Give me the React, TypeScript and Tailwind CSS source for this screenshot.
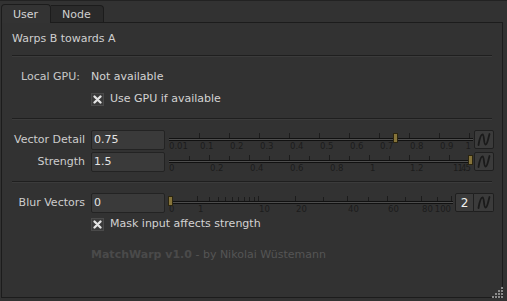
import React from 'react';

type Tick = { x: number; major?: boolean };
type Label = { x: number; text: string; end?: boolean };

const Slider: React.FC<{ width: number; ticks: Tick[]; labels: Label[]; handle: number }> = ({ width, ticks, labels, handle }) => (
  <svg width={width} height={20} className="shrink-0 ml-[2px]">
    <rect x={2} y={8} width={width - 2} height={1} fill="#111" />
    <rect x={2} y={9} width={width - 2} height={1} fill="#4e4e4e" />
    <rect x={2} y={10} width={width - 2} height={1} fill="#111" />
    {ticks.map((t, i) => (
      <rect key={i} x={Math.round(t.x)} y={t.major ? 3 : 4} width={1} height={t.major ? 5 : 4} fill="#1c1c1c" />
    ))}
    {labels.map((l, i) => (
      <text
        key={i}
        x={l.end ? l.x : Math.round(l.x) + 1}
        y={19}
        fontSize={8.5}
        fill="#1c1c1c"
        textAnchor={l.end ? 'end' : 'start'}
        fontFamily="DejaVu Sans, sans-serif"
      >
        {l.text}
      </text>
    ))}
    <rect x={Math.round(handle) - 1 + 0.5} y={3.5} width={4} height={9} fill="#86743a" stroke="#2b2510" />
  </svg>
);

const Wave: React.FC = () => (
  <svg width={18} height={17} viewBox="0 0 18 17">
    <path
      d="M3.5 14 C4.5 8, 5.5 3.5, 7.5 3.5 C9.5 3.5, 8.5 13.5, 10.5 13.5 C12.5 13.5, 13 8, 14.5 3"
      fill="none"
      stroke="#1a1a1a"
      strokeWidth={1.8}
      strokeLinecap="round"
    />
  </svg>
);

const CurveButton: React.FC = () => (
  <div className="ml-[1px] w-[20px] h-[19px] self-start bg-[#3b3b3b] border border-[#1f1f1f] rounded-[2px] flex items-center justify-center">
    <Wave />
  </div>
);

const Check: React.FC<{ label: string; className?: string }> = ({ label, className }) => (
  <div className={`flex items-center h-[16px] pl-[89px] ${className ?? ''}`}>
    <div className="w-[13px] h-[13px] bg-[#3a3a3a] border border-[#4a4a4a] flex items-center justify-center">
      <svg width={9} height={9} viewBox="0 0 9 9">
        <path d="M1.5 1.5 L7.5 7.5 M7.5 1.5 L1.5 7.5" stroke="#e4e4e4" strokeWidth={2.3} strokeLinecap="round" />
      </svg>
    </div>
    <span className="ml-[6px] text-[#d2d2d2] leading-[14px]">{label}</span>
  </div>
);

const Input: React.FC<{ value: string }> = ({ value }) => (
  <div className="ml-[6px] w-[74px] h-[20px] bg-[#3a3a3a] border border-[#232323] rounded-[2px] flex items-center pl-[2px] text-[#e4e4e4]">
    {value}
  </div>
);

const Sep: React.FC<{ className?: string }> = ({ className }) => (
  <div className={`ml-[10px] mr-[10px] h-[2px] border-t border-[#1f1f1f] border-b border-b-[#3b3b3b] ${className ?? ''}`} />
);

const vd = (v: number) => 2 + 300 * v;
const st = (v: number) => 2 + 200 * v;
const bl = (v: number) => 2 + 282 * Math.sqrt(v / 100);

const vdTicks: Tick[] = Array.from({ length: 10 }, (_, i) => ({ x: vd((i + 1) / 10), major: true }));
const vdLabels: Label[] = [
  { x: 1, text: '0.01' },
  ...[1, 2, 3, 4, 5, 6, 7, 8, 9].map((i) => ({ x: vd(i / 10), text: `0.${i}` })),
  { x: 304, text: '1', end: true },
];

const stTicks: Tick[] = Array.from({ length: 15 }, (_, i) => ({ x: st((i + 1) / 10), major: (i + 1) % 2 === 0 }));
const stLabels: Label[] = [
  { x: 1, text: '0' },
  ...[0.2, 0.4, 0.6, 0.8].map((v) => ({ x: st(v), text: `${v}` })),
  { x: st(1), text: '1' },
  { x: st(1.2), text: '1.2' },
  { x: st(1.4) + 3, text: '1.4' },
  { x: 304, text: '1.5', end: true },
];

const blTicks: Tick[] = [
  ...[1, 2, 3, 4, 5, 6, 7, 8, 9].map((v) => ({ x: bl(v), major: v === 1 })),
  ...[10, 20, 30, 40, 50, 60, 70, 80, 90, 100].map((v) => ({ x: bl(v), major: v % 20 === 0 || v === 10 })),
];
const blLabels: Label[] = [
  { x: 1, text: '0' },
  ...[1, 10, 20, 40, 60, 80].map((v) => ({ x: bl(v), text: `${v}` })),
  { x: 284, text: '100', end: true },
];

const Row: React.FC<{ label: string; children: React.ReactNode; className?: string }> = ({ label, children, className }) => (
  <div className={`flex items-center h-[20px] ${className ?? ''}`}>
    <div className="w-[83px] text-right text-[#cdcdcd] shrink-0">{label}</div>
    {children}
  </div>
);

export default function App() {
  return (
    <div className="relative w-[507px] h-[301px] bg-[#323232] font-['DejaVu_Sans',sans-serif] text-[11px] leading-[14px] overflow-hidden border-t border-[#222]">
      {/* tabs */}
      <div className="flex items-end h-[21px] pl-[1px]">
        <div className="relative z-10 -mb-px w-[50px] h-[19px] bg-[#333] border border-b-0 border-[#1c1c1c] rounded-t-[4px] text-[#d6d6d6] pl-[11px] pt-[3px]">
          User
        </div>
        <div className="w-[53px] h-[17px] bg-[#2a2a2a] border border-b-0 border-l-0 border-[#1c1c1c] rounded-tr-[4px] text-[#cfcfcf] pl-[11px] pt-[2px]">
          Node
        </div>
      </div>
      {/* pane */}
      <div className="ml-[1px] w-[502px] h-[276px] border border-[#1c1c1c]">
        <div className="mt-[9px] pl-[10px] text-[#cfcfcf] h-[14px]">Warps B towards A</div>
        <Sep className="mt-[9px]" />
        <div className="mt-[13px] flex h-[14px]">
          <div className="w-[78px] text-right text-[#c8c8c8]">Local GPU:</div>
          <div className="ml-[11px] text-[#d2d2d2]">Not available</div>
        </div>
        <Check label="Use GPU if available" className="mt-[7px]" />
        <Sep className="mt-[11px]" />
        <Row label="Vector Detail" className="mt-[10px]">
          <Input value="0.75" />
          <Slider width={306} ticks={vdTicks} labels={vdLabels} handle={vd(0.75)} />
          <CurveButton />
        </Row>
        <Row label="Strength" className="mt-[2px]">
          <Input value="1.5" />
          <Slider width={306} ticks={stTicks} labels={stLabels} handle={st(1.5)} />
          <CurveButton />
        </Row>
        <Sep className="mt-[9px]" />
        <Row label="Blur Vectors" className="mt-[10px]">
          <Input value="0" />
          <Slider width={286} ticks={blTicks} labels={blLabels} handle={bl(0)} />
          <div className="ml-[2px] w-[19px] h-[19px] self-start bg-[#3b3b3b] border border-[#1f1f1f] rounded-l-[2px] flex items-center justify-center text-[#f0f0f0] text-[12px]">
            2
          </div>
          <div className="w-[20px] h-[19px] self-start bg-[#3b3b3b] border border-l-0 border-[#1f1f1f] rounded-r-[2px] flex items-center justify-center">
            <Wave />
          </div>
        </Row>
        <Check label="Mask input affects strength" className="mt-[3px]" />
        <div className="mt-[16px] pl-[89px] h-[14px]">
          <span className="font-bold text-[#4a4a4a]">MatchWarp v1.0</span>
          <span className="text-[#555]"> - by Nikolai Wüstemann</span>
        </div>
      </div>
      {/* resize grip */}
      <svg className="absolute right-[3px] bottom-[2px]" width={12} height={12}>
        {[
          [9, 0],
          [6, 3],
          [9, 3],
          [3, 6],
          [6, 6],
          [9, 6],
          [0, 9],
          [3, 9],
          [6, 9],
          [9, 9],
        ].map(([x, y], i) => (
          <rect key={i} x={x} y={y} width={2} height={2} fill="#8a8a8a" />
        ))}
      </svg>
    </div>
  );
}
